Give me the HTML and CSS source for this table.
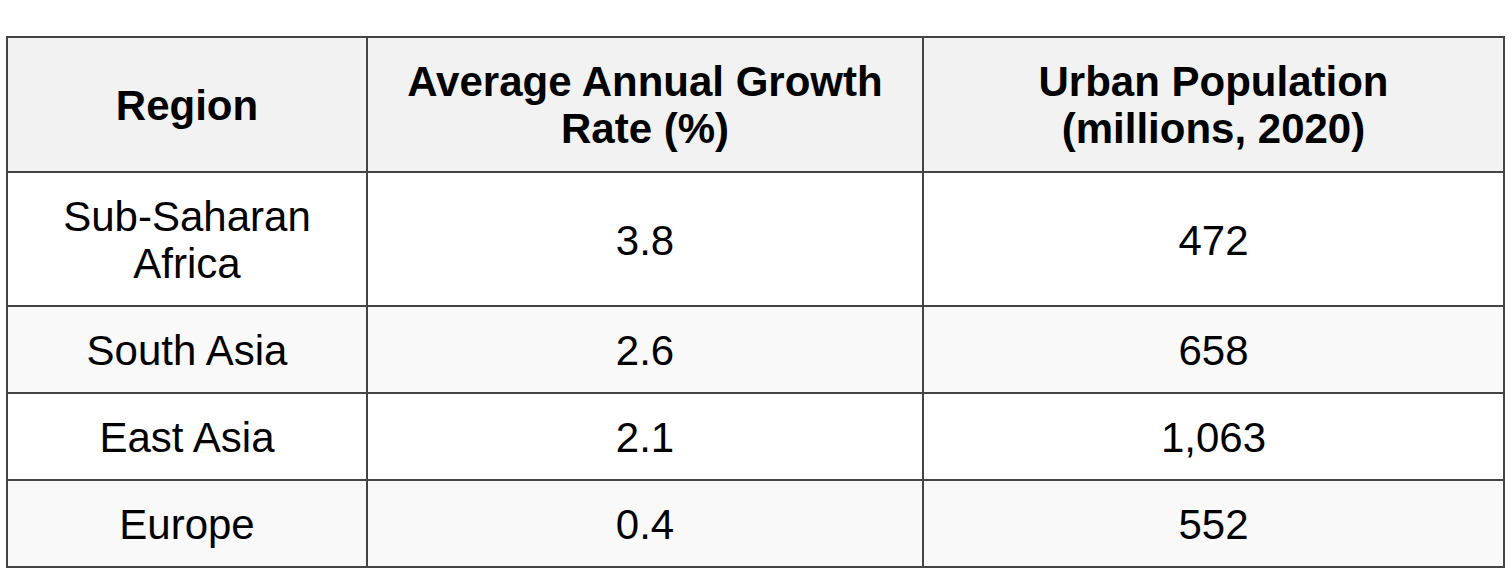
FILE: index.html
```html
<!DOCTYPE html>
<html>
<head>
<meta charset="utf-8">
<link rel="stylesheet" href="styles.css">
</head>
<body>
<div class="wrap">
<table class="data">
  <thead>
    <tr>
      <th class="c1">Region</th>
      <th class="c2">Average Annual Growth Rate (%)</th>
      <th class="c3">Urban Population (millions, 2020)</th>
    </tr>
  </thead>
  <tbody>
    <tr><td>Sub-Saharan Africa</td><td>3.8</td><td>472</td></tr>
    <tr class="alt"><td>South Asia</td><td>2.6</td><td>658</td></tr>
    <tr><td>East Asia</td><td>2.1</td><td>1,063</td></tr>
    <tr class="alt"><td>Europe</td><td>0.4</td><td>552</td></tr>
  </tbody>
</table>
</div>
</body>
</html>
```
FILE: styles.css
```css
html, body {
  margin: 0;
  padding: 0;
  background: #ffffff;
}
.wrap {
  padding: 36px 0 0 6px;
}
.data {
  border-collapse: separate;
  border-spacing: 0;
  table-layout: fixed;
  width: 1499px;
  border-top: 2px solid #444444;
  border-left: 2px solid #444444;
  font-family: "Liberation Sans", Arial, sans-serif;
  font-size: 42px;
  line-height: 47px;
  color: #000000;
}
.data th,
.data td {
  box-sizing: border-box;
  border-right: 2px solid #444444;
  border-bottom: 2px solid #444444;
  padding: 20px 32px 18px;
  text-align: center;
  vertical-align: middle;
}
.data th {
  background: #f2f2f2;
  font-weight: bold;
  padding-bottom: 19px;
}
.data th.c1 { width: 360px; }
.data th.c2 { width: 556px; }
.data th.c3 { width: 581px; }
.data tr.alt td {
  background: #f9f9f9;
}
```
